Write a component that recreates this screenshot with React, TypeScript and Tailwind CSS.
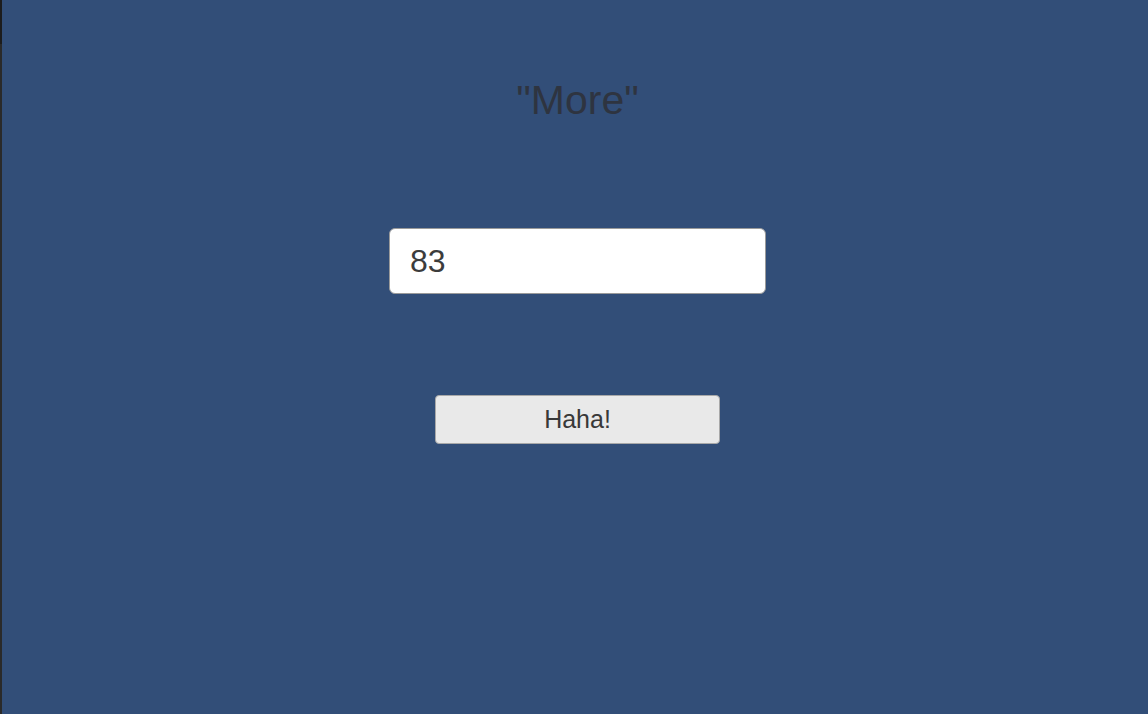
import React, { useState } from 'react';

const App = () => {
  const [value, setValue] = useState('83');

  return (
    <div className="flex h-[714px] w-[1148px] bg-[#324e78] font-['Liberation_Sans',Arial,sans-serif]">
      <div className="flex w-[2px] flex-col">
        <div className="h-[44px] bg-[#1c1c1c]" />
        <div className="flex-1 bg-[#2a2a2a]" />
      </div>

      <div className="flex flex-1 flex-col items-center pl-[5px]">
        <h1 className="mt-[77px] h-[46px] text-[41px] leading-[46px] text-[#2e3440]">"More"</h1>

        <input
          value={value}
          onChange={(e) => setValue(e.target.value)}
          className="mt-[105px] h-[66px] w-[377px] rounded-[6px] border border-[#9a9a9a] bg-white px-[20px] text-[32px] text-[#3c3c3c] outline-none"
        />

        <button className="mt-[101px] h-[49px] w-[285px] rounded-[4px] border border-[#a8a8a8] bg-[#e9e9e9] text-[25px] text-[#383838]">
          Haha!
        </button>
      </div>
    </div>
  );
};

export default App;
